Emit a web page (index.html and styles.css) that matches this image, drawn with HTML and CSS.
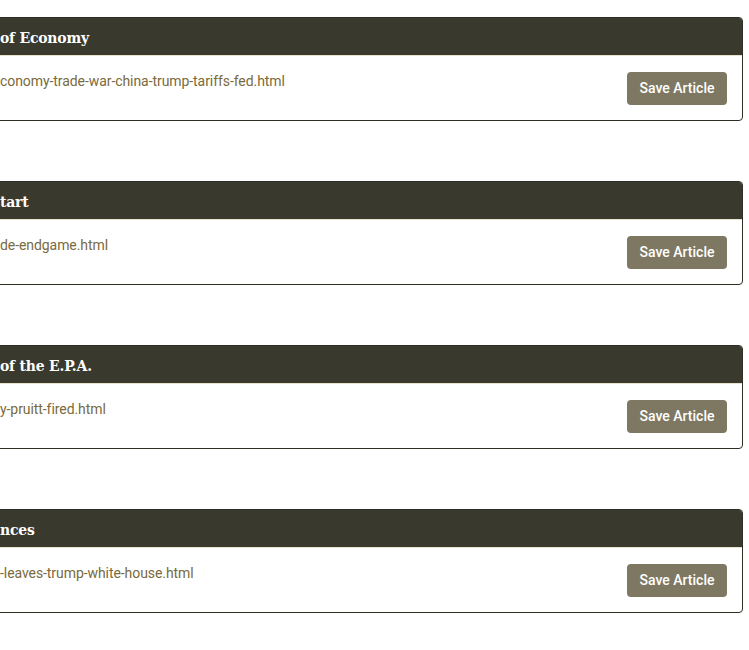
FILE: index.html
```html
<!DOCTYPE html>
<html lang="en">
<head>
<meta charset="utf-8">
<title>Saved Articles</title>
<link rel="stylesheet" href="styles.css">
</head>
<body>
<main class="list">
  <article class="card">
    <header class="card-head"><h2 class="card-title">of Economy</h2></header>
    <div class="card-body">
      <a class="card-link" href="#">conomy-trade-war-china-trump-tariffs-fed.html</a>
      <button class="save-btn" type="button">Save Article</button>
    </div>
  </article>
  <article class="card">
    <header class="card-head"><h2 class="card-title">tart</h2></header>
    <div class="card-body">
      <a class="card-link" href="#">de-endgame.html</a>
      <button class="save-btn" type="button">Save Article</button>
    </div>
  </article>
  <article class="card">
    <header class="card-head"><h2 class="card-title">of the E.P.A.</h2></header>
    <div class="card-body">
      <a class="card-link" href="#">y-pruitt-fired.html</a>
      <button class="save-btn" type="button">Save Article</button>
    </div>
  </article>
  <article class="card">
    <header class="card-head"><h2 class="card-title">nces</h2></header>
    <div class="card-body">
      <a class="card-link" href="#">-leaves-trump-white-house.html</a>
      <button class="save-btn" type="button">Save Article</button>
    </div>
  </article>
</main>
</body>
</html>
```
FILE: styles.css
```css
html, body {
  margin: 0;
  padding: 0;
  background: #ffffff;
  overflow: hidden;
}

.list {
  display: flex;
  flex-direction: column;
  gap: 60px;
  margin-left: -21px;
  padding: 17px 6px 0 0;
}

.card {
  border: 1px solid #2f2e24;
  border-radius: 4px;
  overflow: hidden;
  background: #ffffff;
}

.card-head {
  background: #3a392d;
  height: 37px;
  border-bottom: 1px solid #e9e4cf;
  display: flex;
  align-items: center;
  padding-left: 20px;
}

.card-title {
  margin: 0;
  color: #ffffff;
  font-family: "DejaVu Serif Condensed", "DejaVu Serif", serif;
  font-stretch: condensed;
  font-weight: bold;
  font-size: 15.5px;
  letter-spacing: -0.2px;
  line-height: 20px;
  position: relative;
  top: 1px;
}

.card-body {
  height: 64px;
  display: flex;
  justify-content: space-between;
  align-items: center;
  padding: 0 15px 0 20px;
  box-sizing: border-box;
}

.card-link {
  align-self: flex-start;
  margin-top: 15px;
  color: #7a6a3c;
  text-decoration: none;
  font-family: Roboto, "Liberation Sans", sans-serif;
  font-size: 14px;
  letter-spacing: -0.07px;
  line-height: 20px;
}

.save-btn {
  width: 100px;
  height: 33px;
  border: none;
  border-radius: 4px;
  background: #7e7862;
  color: #ffffff;
  font-family: Roboto, "Liberation Sans", sans-serif;
  font-weight: 500;
  font-size: 14px;
  padding: 0;
  cursor: pointer;
}
```
